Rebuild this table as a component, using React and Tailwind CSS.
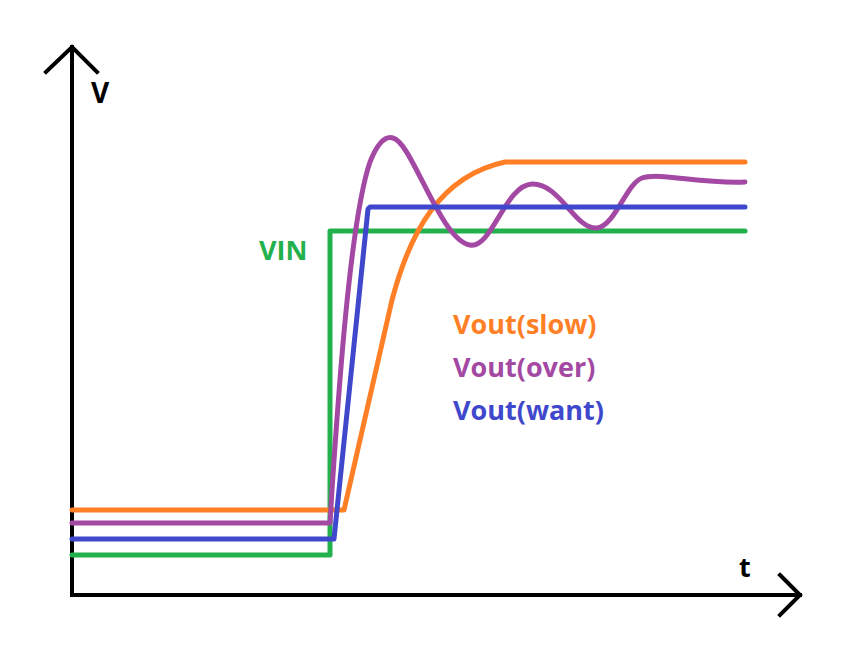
import React from "react"

const ORANGE = "#ff7f27"
const PURPLE = "#a349a4"
const BLUE = "#3f48cc"
const GREEN = "#22b14c"

const labelFont = "'Open Sans', 'Noto Sans', sans-serif"

export default function App() {
  return (
    <div className="w-[853px] h-[653px] bg-white overflow-hidden">
      <svg width="853" height="653" viewBox="0 0 853 653" fill="none">
        {/* axes */}
        <g stroke="#000" strokeWidth="4" strokeLinecap="square">
          <path d="M72 47 V595 H800" />
          <path d="M46 72 L72 47 L97 72" />
          <path d="M780 575 L800 595 L780 615" />
        </g>

        {/* signals */}
        <g strokeWidth="5" strokeLinecap="round" strokeLinejoin="round">
          <path stroke={GREEN} d="M72 555 H330 V231 H745" />
          <path stroke={ORANGE} d="M72 510 H344 L392 300 C410 232, 440 176, 505 162 H745" />
          <path
            stroke={PURPLE}
            d="M72 523 H330 L332 490 C338 400, 350 220, 370 162 C378 142, 386 136, 393 138 C412 142, 440 240, 470 245 C492 249, 505 185, 532 184 C560 183, 575 230, 597 228 C615 226, 626 184, 642 178 C660 172, 700 184, 745 182"
          />
          <path stroke={BLUE} d="M72 539 H334 L368 209 L370 207 H745" />
        </g>

        {/* labels */}
        <g fontFamily={labelFont} fontWeight="700">
          <text x="91" y="103" fontSize="28" fill="#000">V</text>
          <text x="739" y="577" fontSize="27" fill="#000">t</text>
          <text x="259" y="260" fontSize="27" fill={GREEN}>VIN</text>
          <text x="453" y="334" fontSize="27" fill={ORANGE}>Vout(slow)</text>
          <text x="453" y="377" fontSize="27" fill={PURPLE}>Vout(over)</text>
          <text x="453" y="420" fontSize="27" fill={BLUE}>Vout(want)</text>
        </g>
      </svg>
    </div>
  )
}
